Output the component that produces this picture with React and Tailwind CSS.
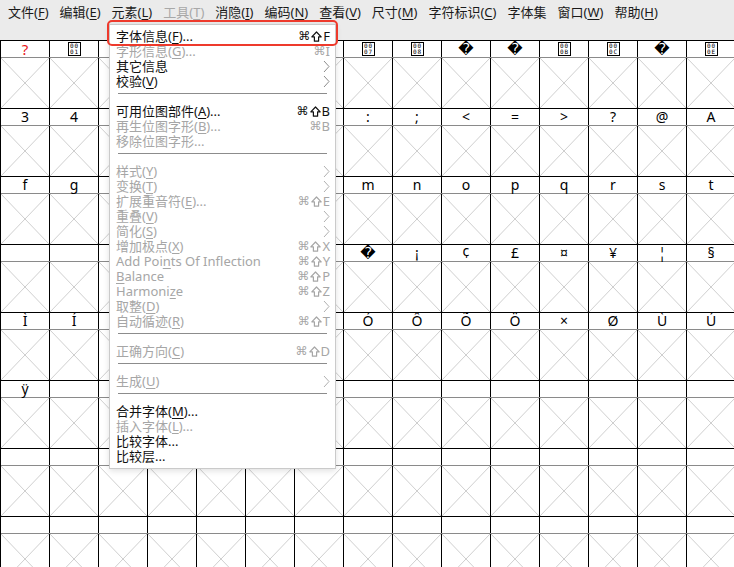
const mn = (text) => {
  const i = text.indexOf("&");
  if (i < 0) return text;
  return (
    <>
      {text.slice(0, i)}
      <span className="underline underline-offset-[2px] decoration-1">{text[i + 1]}</span>
      {text.slice(i + 2)}
    </>
  );
};

const menubar = [
  ["文件(&F)"],
  ["编辑(&E)"],
  ["元素(&L)"],
  ["工具(&T)", true],
  ["消隐(&I)"],
  ["编码(&N)"],
  ["查看(&V)"],
  ["尺寸(&M)"],
  ["字符标识(&C)"],
  ["字体集"],
  ["窗口(&W)"],
  ["帮助(&H)"],
];

// sc: key letter, sh: shift modifier
const menu = [
  { t: "字体信息(&F)...", sc: "F", sh: true },
  { t: "字形信息(&G)...", sc: "I", dis: true },
  { t: "其它信息", sub: true },
  { t: "校验(&V)", sub: true },
  "sep",
  { t: "可用位图部件(&A)...", sc: "B", sh: true },
  { t: "再生位图字形(&B)...", sc: "B", dis: true },
  { t: "移除位图字形...", dis: true },
  "sep",
  { t: "样式(&Y)", sub: true, dis: true },
  { t: "变换(&T)", sub: true, dis: true },
  { t: "扩展重音符(&E)...", sc: "E", sh: true, dis: true },
  { t: "重叠(&V)", sub: true, dis: true },
  { t: "简化(&S)", sub: true, dis: true },
  { t: "增加极点(&X)", sc: "X", sh: true, dis: true },
  { t: "Add Poi&nts Of Inflection", sc: "Y", sh: true, dis: true },
  { t: "&Balance", sc: "P", sh: true, dis: true },
  { t: "Harmoni&ze", sc: "Z", sh: true, dis: true },
  { t: "取整(&D)", sub: true, dis: true },
  { t: "自动循迹(&R)", sc: "T", sh: true, dis: true },
  "sep",
  { t: "正确方向(&C)", sc: "D", sh: true, dis: true },
  "sep",
  { t: "生成(&U)", sub: true, dis: true },
  "sep",
  { t: "合并字体(&M)..." },
  { t: "插入字体(&L)...", dis: true },
  { t: "比较字体..." },
  { t: "比较层..." },
];

const B = (code) => ({ box: code });
const R = "\uFFFD";

const rows = [
  [{ red: "?" }, B("01"), B("02"), B("03"), B("04"), B("05"), B("06"), B("07"), B("08"), R, R, B("0B"), B("0C"), R, B("0E")],
  ["3", "4", "5", "6", "7", "8", "9", ":", ";", "<", "=", ">", "?", "@", "A"],
  ["f", "g", "h", "i", "j", "k", "l", "m", "n", "o", "p", "q", "r", "s", "t"],
  ["", "", "", "", "", "", "", R, "¡", "¢", "£", "¤", "¥", "¦", "§"],
  ["Ì", "Í", "Î", "Ï", "Ð", "Ñ", "Ò", "Ó", "Ô", "Õ", "Ö", "×", "Ø", "Ù", "Ú"],
  ["ÿ", "", "", "", "", "", "", "", "", "", "", "", "", "", ""],
  Array(15).fill(""),
  Array(15).fill(""),
];

const Label = ({ v }) => {
  if (!v) return null;
  if (v.red) return <span className="text-[#e8161b] text-[15px]">{v.red}</span>;
  if (v.box)
    return (
      <div className="flex flex-col items-center justify-center w-[13px] h-[14px] border border-black font-['DejaVu_Sans_Mono',monospace] text-[6px] leading-[6px] tracking-[1px] pl-px">
        <span>00</span>
        <span>{v.box}</span>
      </div>
    );
  if (v === R) return <span className="font-['DejaVu_Sans',sans-serif] text-[15px]">{v}</span>;
  return <span>{v}</span>;
};

const Cross = () => (
  <svg width="48" height="50" viewBox="0 0 48 50" preserveAspectRatio="none" className="block">
    <line x1="0" y1="0" x2="48" y2="50" stroke="#cfcfcf" strokeWidth="1" />
    <line x1="48" y1="0" x2="0" y2="50" stroke="#cfcfcf" strokeWidth="1" />
  </svg>
);

const Chevron = ({ dis }) => (
  <svg width="7" height="13" viewBox="0 0 7 13" className="block">
    <polyline points="1,1 6,6.5 1,12" fill="none" stroke={dis ? "#b0b0b0" : "#8c8c8c"} strokeWidth="1" />
  </svg>
);

const Shift = () => (
  <svg width="11" height="11" viewBox="0 0 11 11" className="block mx-[1px]">
    <path d="M5.5 1 L10.2 5.8 L7.6 5.8 L7.6 10.2 L3.4 10.2 L3.4 5.8 L0.8 5.8 Z" fill="none" stroke="currentColor" strokeWidth="1.2" strokeLinejoin="round" />
  </svg>
);

const Shortcut = ({ sc, sh }) => (
  <span className="flex items-center h-[15px] whitespace-nowrap">
    <span className="font-['DejaVu_Sans',sans-serif] text-[12px]">⌘</span>
    {sh && <Shift />}
    <span className="text-[13px]">{sc}</span>
  </span>
);

export default function App() {
  return (
    <div className="relative w-[734px] h-[567px] overflow-hidden bg-white font-['Noto_Sans','Noto_Sans_CJK_SC',sans-serif] text-black">
      <div className="h-[40px] bg-[#ebebeb]">
        <div className="flex items-center h-[24px] pl-[8px] gap-[11px] text-[13px] leading-[16px]">
          {menubar.map(([t, dis]) => (
            <span key={t} className={dis ? "text-[#a8a8a8]" : "text-[#1a1a1a]"}>
              {mn(t)}
            </span>
          ))}
        </div>
      </div>

      <div className="border-l border-black">
        {rows.map((row, ri) => (
          <div key={ri} className="border-t border-black">
            <div className="flex h-[16px]">
              {row.map((v, ci) => (
                <div key={ci} className="w-[49px] shrink-0 border-r border-black flex items-center justify-center text-[14px] leading-[16px]">
                  <Label v={v} />
                </div>
              ))}
            </div>
            <div className="flex border-t border-[#8a8a8a]">
              {row.map((_, ci) => (
                <div key={ci} className="w-[49px] shrink-0 border-r border-black">
                  <Cross />
                </div>
              ))}
            </div>
          </div>
        ))}
      </div>

      <div className="absolute left-[109px] top-[24px] w-[227px] bg-white border border-[#cacaca] shadow-[0_2px_6px_rgba(0,0,0,0.12)] py-[4px] text-[13px] leading-[15px]">
        {menu.map((it, i) =>
          it === "sep" ? (
            <div key={i} className="pt-[4px] pb-[10px] px-[8px]">
              <div className="h-px bg-[#8c8c8c]" />
            </div>
          ) : (
            <div
              key={i}
              className={`flex h-[15px] items-center justify-between pl-[6px] pr-[5px] ${it.dis ? "text-[#a6a6a6]" : "text-[#111]"}`}
            >
              <span className="inline-block h-[15px] whitespace-nowrap">{mn(it.t)}</span>
              {it.sc && <Shortcut sc={it.sc} sh={it.sh} />}
              {it.sub && <Chevron dis={it.dis} />}
            </div>
          )
        )}
      </div>

      <div className="absolute left-[107px] top-[20px] w-[231px] h-[26px] border-[2.5px] border-[#ee3a2c] rounded-[5px]" />
    </div>
  );
}
